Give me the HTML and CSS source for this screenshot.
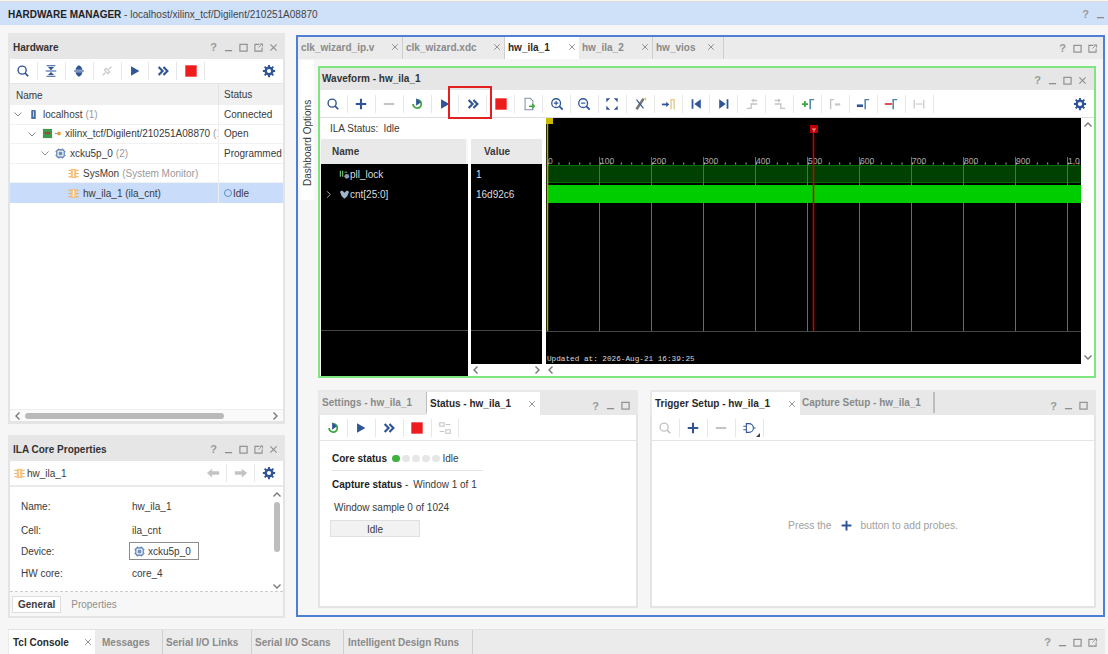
FILE: index.html
```html
<!DOCTYPE html>
<html lang="en">
<head>
    <meta charset="UTF-8">
    <title>Hardware Manager</title>
    <link rel="stylesheet" href="styles.css">
</head>
<body>
    <svg class="defs" width="0" height="0">
        <symbol id="i-search" viewBox="0 0 16 16"><circle cx="7" cy="7" r="4.6" fill="none" stroke="currentColor" stroke-width="1.6"/><path d="M10.4 10.4L14 14" stroke="currentColor" stroke-width="2"/></symbol>
        <symbol id="i-collapse" viewBox="0 0 16 16"><path d="M3 2h10M3 14h10M2 8h12" stroke="currentColor" stroke-width="1.4"/><path d="M4.500 3.500h7L8 7zM4.500 12.500h7L8 9z" fill="currentColor"/></symbol>
        <symbol id="i-expand" viewBox="0 0 16 16"><path d="M2.500 8h11" stroke="currentColor" stroke-width="1.400"/><path d="M4 6.500C4.500 4 6 2.500 8 1.500c2 1 3.500 2.500 4 5zM4 9.500h8c-.5 2.500-2 4-4 5-2-1-3.500-2.500-4-5z" fill="currentColor"/></symbol>
        <symbol id="i-plug" viewBox="0 0 16 16"><path d="M3 13l3-3M10 6l3-3M5 7l4 4 2-2-4-4z" fill="none" stroke="currentColor" stroke-width="1.300"/></symbol>
        <symbol id="i-play" viewBox="0 0 16 16"><path d="M3.500 2.500L13 8l-9.500 5.500z" fill="currentColor"/></symbol>
        <symbol id="i-ff" viewBox="0 0 16 16"><path d="M3 3.500L7.500 8 3 12.500M8.500 3.500L13 8l-4.500 4.500" fill="none" stroke="currentColor" stroke-width="2.500"/></symbol>
        <symbol id="i-stop" viewBox="0 0 16 16"><rect x="1.500" y="1.500" width="13" height="13" fill="currentColor"/></symbol>
        <symbol id="i-gear" viewBox="0 0 16 16"><circle cx="8" cy="8" r="3.800" fill="none" stroke="currentColor" stroke-width="2.800"/><path d="M8 1v3M8 12v3M1 8h3M12 8h3M3 3l2 2M11 11l2 2M3 13l2-2M11 5l2-2" stroke="currentColor" stroke-width="2.200"/></symbol>
        <symbol id="i-plus" viewBox="0 0 16 16"><path d="M8 2v12M2 8h12" stroke="currentColor" stroke-width="2.400"/></symbol>
        <symbol id="i-minus" viewBox="0 0 16 16"><path d="M2 8h12" stroke="currentColor" stroke-width="2.400"/></symbol>
        <symbol id="i-refresh" viewBox="0 0 16 16"><path d="M3.500 8a4.700 4.700 0 1 0 4.500-4.700" fill="none" stroke="#3fa63f" stroke-width="2"/><path d="M7 1.500L12.500 6 7 10z" fill="#2f5597"/></symbol>
        <symbol id="i-export" viewBox="0 0 16 16"><path d="M3.500 1.500h6l3 3v10h-9z" fill="#fff" stroke="#7f8fa8" stroke-width="1.200"/><path d="M8 10.500h6M11.500 8l2.500 2.500-2.500 2.500" fill="none" stroke="#3fa63f" stroke-width="1.600"/></symbol>
        <symbol id="i-zoomin" viewBox="0 0 16 16"><circle cx="7" cy="7" r="5" fill="none" stroke="currentColor" stroke-width="1.500"/><path d="M10.500 10.500L14.500 14.500" stroke="currentColor" stroke-width="2"/><path d="M4.500 7h5M7 4.500v5" stroke="currentColor" stroke-width="1.300"/></symbol>
        <symbol id="i-zoomout" viewBox="0 0 16 16"><circle cx="7" cy="7" r="5" fill="none" stroke="currentColor" stroke-width="1.500"/><path d="M10.500 10.500L14.500 14.500" stroke="currentColor" stroke-width="2"/><path d="M4.500 7h5" stroke="currentColor" stroke-width="1.300"/></symbol>
        <symbol id="i-fit" viewBox="0 0 16 16"><path d="M1.500 1.500h4.500l-4.500 4.500zM14.500 1.500h-4.500l4.500 4.500zM1.500 14.500h4.500l-4.500-4.500zM14.500 14.500h-4.500l4.500-4.500z" fill="currentColor"/></symbol>
        <symbol id="i-cut" viewBox="0 0 16 16"><path d="M4 14L12 2" stroke="#777" stroke-width="3"/><path d="M4 3l8 10" stroke="#2f5597" stroke-width="1.300"/><path d="M12 1.500h2.500V4" fill="none" stroke="#d9c27a" stroke-width="1.200"/></symbol>
        <symbol id="i-mark-in" viewBox="0 0 16 16"><path d="M15 14V3h-3.500v11" fill="none" stroke="#e3cb85" stroke-width="1.600"/><path d="M1 8.500h6" stroke="#2f5597" stroke-width="2"/><path d="M6 5.500l3.500 3-3.500 3z" fill="#2f5597"/></symbol>
        <symbol id="i-first" viewBox="0 0 16 16"><path d="M3 2.500h2v11H3zM13.500 2.500v11L6 8z" fill="currentColor"/></symbol>
        <symbol id="i-last" viewBox="0 0 16 16"><path d="M13 2.500h-2v11h2zM2.500 2.500v11L10 8z" fill="currentColor"/></symbol>
        <symbol id="i-step-a" viewBox="0 0 16 16"><path d="M2 13h5V8h7M9 4h5" fill="none" stroke="#c4c4c4" stroke-width="1.500"/><path d="M7 4l3-2.500v5z" fill="#c4c4c4"/></symbol>
        <symbol id="i-step-b" viewBox="0 0 16 16"><path d="M2 8h7v5h5M2 4h5" fill="none" stroke="#c4c4c4" stroke-width="1.500"/><path d="M9 4L6 1.500v5z" fill="#c4c4c4"/></symbol>
        <symbol id="i-add-mark" viewBox="0 0 16 16"><path d="M1 8h7M4.500 4.500v7" stroke="#3fa63f" stroke-width="2"/><path d="M10.500 14V3H15" fill="none" stroke="#4a7fa8" stroke-width="1.700"/></symbol>
        <symbol id="i-prev-mark" viewBox="0 0 16 16"><path d="M3 14V3h4" fill="none" stroke="#c4c4c4" stroke-width="1.600"/><path d="M8 8.500h6" stroke="#c4c4c4" stroke-width="2.400"/></symbol>
        <symbol id="i-next-mark" viewBox="0 0 16 16"><path d="M10.500 14V3H15" fill="none" stroke="#4a7fa8" stroke-width="1.700"/><path d="M1 10h7" stroke="#2f5597" stroke-width="3"/></symbol>
        <symbol id="i-del-mark" viewBox="0 0 16 16"><path d="M1 8h8" stroke="#e03030" stroke-width="2"/><path d="M10.500 14V3H15" fill="none" stroke="#4a7fa8" stroke-width="1.700"/></symbol>
        <symbol id="i-span" viewBox="0 0 16 16"><path d="M2.500 3v10M13.500 3v10M4 8h8" stroke="#c4c4c4" stroke-width="1.300"/></symbol>
        <symbol id="i-slices" viewBox="0 0 16 16"><path d="M2 2h5v4H2zM9 10h5v4H9z" fill="none" stroke="#c4c4c4" stroke-width="1.200"/><path d="M9 4h5M2 12h5" stroke="#c4c4c4" stroke-width="1.200"/></symbol>
        <symbol id="i-gate" viewBox="0 0 16 16"><path d="M5 3h3a5 5 0 0 1 0 10H5zM1.500 6H5M1.500 10H5M13 8h2.500" fill="none" stroke="currentColor" stroke-width="1.200"/></symbol>
        <symbol id="i-arrow-l" viewBox="0 0 16 16"><path d="M1 8l6-5v3h8v4H7v3z" fill="currentColor"/></symbol>
        <symbol id="i-arrow-r" viewBox="0 0 16 16"><path d="M15 8L9 3v3H1v4h8v3z" fill="currentColor"/></symbol>
        <symbol id="i-min" viewBox="0 0 10 10"><path d="M1 8.500h8" stroke="currentColor" stroke-width="1.400"/></symbol>
        <symbol id="i-max" viewBox="0 0 10 10"><rect x="1" y="1.500" width="8" height="7.500" fill="none" stroke="currentColor" stroke-width="1.300"/></symbol>
        <symbol id="i-float" viewBox="0 0 10 10"><path d="M6 1.500H1v7.500h8V5" fill="none" stroke="currentColor" stroke-width="1.200"/><path d="M5 5l4-4M6.500 1h3v3" fill="none" stroke="currentColor" stroke-width="1"/></symbol>
        <symbol id="i-close" viewBox="0 0 10 10"><path d="M1.500 1.500l7 7M8.500 1.500l-7 7" stroke="currentColor" stroke-width="1.200"/></symbol>
        <symbol id="i-chev-d" viewBox="0 0 10 10"><path d="M1.500 3.500L5 7l3.500-3.500" fill="none" stroke="currentColor" stroke-width="1"/></symbol>
        <symbol id="i-chev-r" viewBox="0 0 10 10"><path d="M3.500 1.500L7 5 3.500 8.500" fill="none" stroke="currentColor" stroke-width="1"/></symbol>
        <symbol id="i-chev-l" viewBox="0 0 10 10"><path d="M6.500 1.500L3 5l3.500 3.500" fill="none" stroke="currentColor" stroke-width="1.400"/></symbol>
        <symbol id="i-chev-rb" viewBox="0 0 10 10"><path d="M3.500 1.500L7 5 3.500 8.500" fill="none" stroke="currentColor" stroke-width="1.400"/></symbol>
        <symbol id="i-chev-u" viewBox="0 0 10 10"><path d="M1.500 6.500L5 3l3.500 3.500" fill="none" stroke="currentColor" stroke-width="1.400"/></symbol>
        <symbol id="i-chev-db" viewBox="0 0 10 10"><path d="M1.500 3.500L5 7l3.500-3.500" fill="none" stroke="currentColor" stroke-width="1.400"/></symbol>
        <symbol id="i-chip" viewBox="0 0 12 12"><rect x="2" y="2" width="8" height="8" rx="1.500" fill="none" stroke="#4a6fa5" stroke-width="1.200"/><rect x="4" y="4" width="4" height="4" fill="#6d8fc0"/><path d="M4 0.500v1M8 0.500v1M4 10.500v1M8 10.500v1M0.500 4h1M0.500 8h1M10.500 4h1M10.500 8h1" stroke="#4a6fa5"/></symbol>
        <symbol id="i-ila" viewBox="0 0 12 12"><rect x="3" y="1" width="6" height="10" fill="#f7c27c"/><path d="M6 2.500v7" stroke="#fff" stroke-width="1.400"/><path d="M0.500 2.500H3M0.500 6H3M0.500 9.500H3M9 2.500h2.500M9 6h2.500M9 9.500h2.500" stroke="#eba040"/></symbol>
        <symbol id="i-host" viewBox="0 0 12 12"><rect x="3.500" y="1" width="5" height="10" rx="1" fill="#4a6fa5"/><path d="M6 2.500v6" stroke="#c9d6ea"/></symbol>
        <symbol id="i-board" viewBox="0 0 12 12"><rect x="1" y="1" width="10" height="10" fill="#3f9a4a"/><rect x="3" y="4.500" width="6" height="2" fill="#a83c3c"/></symbol>
        <symbol id="i-link" viewBox="0 0 8 8"><circle cx="4.500" cy="4" r="2.200" fill="#e8a030"/><path d="M0 4h2.500" stroke="#888"/></symbol>
        <symbol id="i-bit" viewBox="0 0 12 12"><path d="M1.500 2v6.500M4 2v6.500" stroke="#6fbf7a" stroke-width="1.300"/><circle cx="8.500" cy="8" r="2.600" fill="#8f9aa8"/><path d="M6 3.500h3" stroke="#6fbf7a"/></symbol>
        <symbol id="i-bus" viewBox="0 0 12 12"><path d="M1 3l2.500-1.500L6 4l2.500-2.500L11 3 9 8l-3 2.500L3 8z" fill="#9db4cc"/></symbol>
    </svg>

    <div class="title-bar">
        <div><b>HARDWARE MANAGER</b> - localhost/xilinx_tcf/Digilent/210251A08870</div>
        <div class="title-help"><span class="help">?</span><svg class="wc"><use href="#i-min"/></svg></div>
    </div>

    <div class="main">
        <div class="left-col">
            <section class="panel hw-panel">
                <header class="panel-head">
                    <span class="panel-title">Hardware</span>
                    <div class="win-ctl"><span class="help">?</span><svg class="wc"><use href="#i-min"/></svg><svg class="wc"><use href="#i-max"/></svg><svg class="wc"><use href="#i-float"/></svg><svg class="wc"><use href="#i-close"/></svg></div>
                </header>
                <div class="toolbar">
                    <span class="tb"><svg class="blue"><use href="#i-search"/></svg></span>
                    <span class="tb"><svg class="blue"><use href="#i-collapse"/></svg></span>
                    <span class="tb"><svg class="blue"><use href="#i-expand"/></svg></span>
                    <span class="tb"><svg class="dim"><use href="#i-plug"/></svg></span>
                    <span class="tb"><svg class="blue"><use href="#i-play"/></svg></span>
                    <span class="tb"><svg class="blue"><use href="#i-ff"/></svg></span>
                    <span class="tb"><svg class="red"><use href="#i-stop"/></svg></span>
                    <span class="tb-gear"><svg class="blue"><use href="#i-gear"/></svg></span>
                </div>
                <div class="tree-head"><span class="th-name">Name</span><span class="th-status">Status</span></div>
                <div class="tree">
                    <div class="tree-row">
                        <div class="tree-name pad-1"><svg class="chev"><use href="#i-chev-d"/></svg><svg class="node host-node"><use href="#i-host"/></svg>localhost <em>(1)</em></div>
                        <div class="tree-status">Connected</div>
                    </div>
                    <div class="tree-row">
                        <div class="tree-name pad-2"><svg class="chev"><use href="#i-chev-d"/></svg><svg class="node"><use href="#i-board"/></svg><svg class="node-sm"><use href="#i-link"/></svg>xilinx_tcf/Digilent/210251A08870 <em>(1)</em></div>
                        <div class="tree-status">Open</div>
                    </div>
                    <div class="tree-row">
                        <div class="tree-name pad-3"><svg class="chev"><use href="#i-chev-d"/></svg><svg class="node"><use href="#i-chip"/></svg>xcku5p_0 <em>(2)</em></div>
                        <div class="tree-status">Programmed</div>
                    </div>
                    <div class="tree-row">
                        <div class="tree-name pad-4"><svg class="node"><use href="#i-ila"/></svg>SysMon <em>(System Monitor)</em></div>
                        <div class="tree-status"></div>
                    </div>
                    <div class="tree-row selected">
                        <div class="tree-name pad-4"><svg class="node"><use href="#i-ila"/></svg>hw_ila_1 (ila_cnt)</div>
                        <div class="tree-status"><i class="idle-ring"></i>Idle</div>
                    </div>
                </div>
                <div class="hscroll">
                    <svg class="sb-arrow"><use href="#i-chev-l"/></svg>
                    <div class="hscroll-track"><div class="hscroll-thumb"></div></div>
                    <svg class="sb-arrow"><use href="#i-chev-rb"/></svg>
                </div>
            </section>

            <section class="panel props-panel">
                <header class="panel-head">
                    <span class="panel-title">ILA Core Properties</span>
                    <div class="win-ctl"><span class="help">?</span><svg class="wc"><use href="#i-min"/></svg><svg class="wc"><use href="#i-max"/></svg><svg class="wc"><use href="#i-float"/></svg><svg class="wc"><use href="#i-close"/></svg></div>
                </header>
                <div class="props-bar">
                    <svg class="node"><use href="#i-ila"/></svg><span>hw_ila_1</span>
                    <div class="props-nav">
                        <span class="tb"><svg class="dim"><use href="#i-arrow-l"/></svg></span>
                        <span class="tb"><svg class="dim"><use href="#i-arrow-r"/></svg></span>
                        <span class="tb-last"><svg class="blue"><use href="#i-gear"/></svg></span>
                    </div>
                </div>
                <div class="props-body">
                    <div class="props-list">
                        <div class="prop prop-name"><span>Name:</span><span>hw_ila_1</span></div>
                        <div class="prop prop-cell"><span>Cell:</span><span>ila_cnt</span></div>
                        <div class="prop prop-device"><span>Device:</span><span class="device-box"><svg class="node"><use href="#i-chip"/></svg>xcku5p_0</span></div>
                        <div class="prop prop-core"><span>HW core:</span><span>core_4</span></div>
                    </div>
                    <div class="vscroll">
                        <svg class="sb-arrow"><use href="#i-chev-u"/></svg>
                        <div class="vscroll-track"><div class="vscroll-thumb"></div></div>
                        <svg class="sb-arrow"><use href="#i-chev-db"/></svg>
                    </div>
                </div>
                <div class="props-tabs"><span class="ptab-on">General</span><span class="ptab">Properties</span></div>
            </section>
        </div>

        <div class="frame">
            <div class="tabs frame-tabs">
                <div class="tab t-ip">clk_wizard_ip.v<svg class="x"><use href="#i-close"/></svg></div>
                <div class="tab t-xdc">clk_wizard.xdc<svg class="x"><use href="#i-close"/></svg></div>
                <div class="tab on t-ila1">hw_ila_1<svg class="x"><use href="#i-close"/></svg></div>
                <div class="tab t-ila2">hw_ila_2<svg class="x"><use href="#i-close"/></svg></div>
                <div class="tab t-vios">hw_vios<svg class="x"><use href="#i-close"/></svg></div>
                <div class="win-ctl"><span class="help">?</span><svg class="wc"><use href="#i-max"/></svg><svg class="wc"><use href="#i-float"/></svg></div>
            </div>
            <div class="frame-body">
                <div class="dash-strip"><span>Dashboard Options</span></div>
                <div class="frame-col">
                    <section class="wave-panel">
                        <header class="panel-head wave-head">
                            <span class="panel-title">Waveform - hw_ila_1</span>
                            <div class="win-ctl"><span class="help">?</span><svg class="wc"><use href="#i-min"/></svg><svg class="wc"><use href="#i-max"/></svg><svg class="wc"><use href="#i-close"/></svg></div>
                        </header>
                        <div class="toolbar wave-tools">
                            <span class="tb"><svg class="blue"><use href="#i-search"/></svg></span>
                            <span class="tb"><svg class="blue"><use href="#i-plus"/></svg></span>
                            <span class="tb"><svg class="dim"><use href="#i-minus"/></svg></span>
                            <span class="tb"><svg><use href="#i-refresh"/></svg></span>
                            <span class="tb"><svg class="blue"><use href="#i-play"/></svg></span>
                            <span class="tb"><svg class="blue"><use href="#i-ff"/></svg></span>
                            <span class="tb"><svg class="red"><use href="#i-stop"/></svg></span>
                            <span class="tb"><svg><use href="#i-export"/></svg></span>
                            <span class="tb"><svg class="blue"><use href="#i-zoomin"/></svg></span>
                            <span class="tb"><svg class="blue"><use href="#i-zoomout"/></svg></span>
                            <span class="tb"><svg class="blue"><use href="#i-fit"/></svg></span>
                            <span class="tb"><svg><use href="#i-cut"/></svg></span>
                            <span class="tb"><svg><use href="#i-mark-in"/></svg></span>
                            <span class="tb"><svg class="blue"><use href="#i-first"/></svg></span>
                            <span class="tb"><svg class="blue"><use href="#i-last"/></svg></span>
                            <span class="tb"><svg><use href="#i-step-a"/></svg></span>
                            <span class="tb"><svg><use href="#i-step-b"/></svg></span>
                            <span class="tb"><svg><use href="#i-add-mark"/></svg></span>
                            <span class="tb"><svg><use href="#i-prev-mark"/></svg></span>
                            <span class="tb"><svg><use href="#i-next-mark"/></svg></span>
                            <span class="tb"><svg><use href="#i-del-mark"/></svg></span>
                            <span class="tb"><svg><use href="#i-span"/></svg></span>
                            <span class="tb-gear"><svg class="blue"><use href="#i-gear"/></svg></span>
                            <div class="callout"></div>
                        </div>
                        <div class="wave-body">
                            <div class="probes">
                                <div class="ila-status"><span>ILA Status:</span><span>Idle</span></div>
                                <div class="probe-cols">
                                    <div class="probe-names">
                                        <div class="probe-th">Name</div>
                                        <div class="probe-black">
                                            <div class="probe-row"><svg class="node"><use href="#i-bit"/></svg>pll_lock</div>
                                            <div class="probe-row"><svg class="chev-w"><use href="#i-chev-r"/></svg><svg class="node"><use href="#i-bus"/></svg>cnt[25:0]</div>
                                            <div class="probe-rule"></div>
                                        </div>
                                    </div>
                                    <div class="probe-vals">
                                        <div class="probe-th">Value</div>
                                        <div class="probe-black val-black">
                                            <div class="probe-row">1</div>
                                            <div class="probe-row">16d92c6</div>
                                            <div class="probe-rule"></div>
                                        </div>
                                        <div class="wave-scroll"><svg class="sb-arrow"><use href="#i-chev-l"/></svg><svg class="sb-arrow"><use href="#i-chev-rb"/></svg></div>
                                    </div>
                                </div>
                            </div>
                            <div class="trace">
                                <div class="trace-row">
                                    <svg class="trace-svg" width="535" height="246" viewBox="0 0 535 246">
                                        <rect width="535" height="246" fill="#000"/>
                                        <path d="M53.500 39V213M105.500 39V213M157.500 39V213M209.500 39V213M261.500 39V213M313.500 39V213M365.500 39V213M417.500 39V213M469.500 39V213M521.500 39V213" stroke="#6a6a6a"/>
                                        <path d="M0 213.500H535" stroke="#444"/>
                                        <line x1="2" y1="45.500" x2="535" y2="45.500" stroke="#b0b0b0" stroke-width="2" stroke-dasharray="1 9.400"/>
                                        <rect x="1" y="47" width="534" height="18" fill="#004000"/>
                                        <path d="M1 47.500H534M1 64.500H534" stroke="#007000"/>
                                        <rect x="1" y="67" width="534" height="18" fill="#00cd00"/>
                                        <path d="M53.500 47V65M105.500 47V65M157.500 47V65M209.500 47V65M261.500 47V65M313.500 47V65M365.500 47V65M417.500 47V65M469.500 47V65M521.500 47V65" stroke="#4e6e4e"/>
                                        <g class="ruler-text">
                                            <text x="2" y="46">0</text><text x="54" y="46">100</text><text x="106" y="46">200</text><text x="158" y="46">300</text><text x="210" y="46">400</text><text x="262" y="46">500</text><text x="314" y="46">600</text><text x="366" y="46">700</text><text x="418" y="46">800</text><text x="470" y="46">900</text><text x="522" y="46">1,0</text>
                                        </g>
                                        <path d="M1.500 0V213" stroke="#b8a800" stroke-width="1.500"/>
                                        <rect x="0" y="0" width="7" height="6" fill="#c9b800"/>
                                        <path d="M267.500 12V213" stroke="#d00000" stroke-width="1.500"/>
                                        <rect x="264" y="7" width="8" height="8" fill="#c00000"/>
                                        <path d="M266 11h4M268 11v3" stroke="#f0a0a0"/>
                                        <text class="updated" x="1" y="243">Updated at: 2026-Aug-21 16:39:25</text>
                                    </svg>
                                    <div class="trace-vbar">
                                        <svg class="sb-arrow"><use href="#i-chev-u"/></svg>
                                        <svg class="sb-arrow"><use href="#i-chev-db"/></svg>
                                    </div>
                                </div>
                                <div class="wave-scroll trace-scroll"><svg class="sb-arrow"><use href="#i-chev-l"/></svg></div>
                            </div>
                        </div>
                    </section>

                    <div class="lower">
                        <section class="panel status-panel">
                            <div class="tabs inner-tabs">
                                <div class="tab t-settings">Settings - hw_ila_1</div>
                                <div class="tab on t-status">Status - hw_ila_1<svg class="x"><use href="#i-close"/></svg></div>
                                <div class="win-ctl low-ctl"><span class="help">?</span><svg class="wc"><use href="#i-min"/></svg><svg class="wc"><use href="#i-max"/></svg></div>
                            </div>
                            <div class="toolbar low-tools">
                                <span class="tb"><svg><use href="#i-refresh"/></svg></span>
                                <span class="tb"><svg class="blue"><use href="#i-play"/></svg></span>
                                <span class="tb"><svg class="blue"><use href="#i-ff"/></svg></span>
                                <span class="tb"><svg class="red"><use href="#i-stop"/></svg></span>
                                <span class="tb"><svg><use href="#i-slices"/></svg></span>
                            </div>
                            <div class="status-body">
                                <div class="core-line">
                                    <b>Core status</b>
                                    <span class="dots"><i class="dot green"></i><i class="dot"></i><i class="dot"></i><i class="dot"></i><i class="dot"></i></span>
                                    <span>Idle</span>
                                </div>
                                <div class="status-rule"></div>
                                <div class="capture-line"><b>Capture status</b><span class="dash">-</span><span>Window 1 of 1</span></div>
                                <div class="sample-line">Window sample 0 of 1024</div>
                                <div class="idle-btn">Idle</div>
                            </div>
                        </section>

                        <section class="panel trigger-panel">
                            <div class="tabs inner-tabs">
                                <div class="tab on t-trigger">Trigger Setup - hw_ila_1<svg class="x"><use href="#i-close"/></svg></div>
                                <div class="tab t-capture">Capture Setup - hw_ila_1</div>
                                <div class="win-ctl low-ctl"><span class="help">?</span><svg class="wc"><use href="#i-min"/></svg><svg class="wc"><use href="#i-max"/></svg></div>
                            </div>
                            <div class="toolbar low-tools">
                                <span class="tb"><svg class="dim"><use href="#i-search"/></svg></span>
                                <span class="tb"><svg class="blue"><use href="#i-plus"/></svg></span>
                                <span class="tb"><svg class="dim"><use href="#i-minus"/></svg></span>
                                <span class="tb tb-corner"><svg class="blue"><use href="#i-gate"/></svg></span>
                            </div>
                            <div class="trigger-body">
                                <span>Press the</span><svg class="hint-plus blue"><use href="#i-plus"/></svg><span>button to add probes.</span>
                            </div>
                        </section>
                    </div>
                </div>
            </div>
        </div>
    </div>

    <div class="console-tabs">
        <div class="tab on t-tcl">Tcl Console<svg class="x"><use href="#i-close"/></svg></div>
        <div class="tab t-msg">Messages</div>
        <div class="tab t-links">Serial I/O Links</div>
        <div class="tab t-scans">Serial I/O Scans</div>
        <div class="tab t-runs">Intelligent Design Runs</div>
        <div class="win-ctl"><span class="help">?</span><svg class="wc"><use href="#i-min"/></svg><svg class="wc"><use href="#i-max"/></svg><svg class="wc"><use href="#i-float"/></svg></div>
    </div>
</body>
</html>
```

FILE: styles.css
```css
* {
    box-sizing: border-box;
}
html, body {
    margin: 0;
    height: 654px;
    overflow: hidden;
}
body {
    width: 1108px;
    background: #f6f6f6;
    font-family: "Liberation Sans", Arial, sans-serif;
    font-size: 10px;
    color: #3a3a3a;
}
.defs {
    position: absolute;
}
svg {
    width: 14px;
    height: 14px;
    flex: none;
}
.blue { color: #2f5597; }
.dim { color: #c4c4c4; }
.red { color: #ee1c1c; }

.title-bar {
    margin-top: 1px;
    height: 24px;
    padding: 1px 0 0 8px;
    border-top: 1px solid #dcdcdc;
    background: #cfe0f9;
    display: flex;
    align-items: center;
    justify-content: space-between;
    color: #444;
}
.title-bar b {
    color: #222;
}
.title-help {
    display: flex;
    align-items: center;
}
.main {
    display: flex;
    padding: 8px 0 0 8px;
    gap: 11px;
}
.left-col {
    width: 277px;
    display: flex;
    flex-direction: column;
    gap: 11px;
}

/* panels */
.panel {
    border: 2px solid #e4e4e4;
    border-top: 0;
    background: #fff;
    display: flex;
    flex-direction: column;
}
.panel-head {
    height: 26px;
    background: #e6e6e6;
    margin: 0 -2px;
    padding: 2px 4px 0 5px;
    display: flex;
    align-items: center;
    justify-content: space-between;
    flex: none;
}
.panel-title {
    font-weight: bold;
    color: #333;
}
.win-ctl {
    margin-left: auto;
    display: flex;
    align-items: center;
    color: #8b8b8b;
}
.help {
    width: 15px;
    text-align: center;
    font-weight: bold;
    font-size: 11px;
    color: #9a9a9a;
}
.wc {
    width: 15px;
    height: 9px;
    color: #8e8e8e;
}
.toolbar {
    height: 25px;
    background: #fff;
    border-bottom: 1px solid #e4e4e4;
    display: flex;
    align-items: center;
    flex: none;
    position: relative;
}
.low-tools {
    height: 26px;
}
.tb {
    width: 27.9px;
    height: 18px;
    display: flex;
    align-items: center;
    justify-content: center;
    border-right: 1px solid #e6e6e6;
    flex: none;
}
.tb-gear {
    margin-left: auto;
    margin-right: 7px;
    display: flex;
}

/* hardware tree */
.hw-panel {
    height: 391px;
    border-bottom-width: 3px;
}
.tree-head {
    height: 21px;
    background: #f0f0f0;
    display: flex;
    align-items: center;
    flex: none;
    line-height: 23px;
}
.th-name {
    width: 209px;
    padding-left: 6px;
    height: 100%;
    border-right: 1px solid #e2e2e2;
}
.th-status {
    padding-left: 5px;
}
.tree {
    flex: 1;
}
.tree-row {
    height: 19.6px;
    display: flex;
    border-bottom: 1px solid #f1f1f1;
    line-height: 19px;
    white-space: nowrap;
}
.tree-row.selected {
    background: #c9dcfa;
    border-bottom: 0;
}
.tree-name {
    width: 209px;
    overflow: hidden;
    display: flex;
    align-items: center;
    border-right: 1px solid #eee;
    flex: none;
}
.tree-name em {
    font-style: normal;
    color: #9a9a9a;
    margin-left: 3px;
}
.tree-status {
    padding-left: 5px;
    display: flex;
    align-items: center;
}
.pad-1 { padding-left: 3px; }
.pad-2 { padding-left: 17px; }
.pad-3 { padding-left: 30px; }
.pad-4 { padding-left: 58px; }
.chev {
    width: 10px;
    height: 10px;
    color: #8a8a8a;
    margin-right: 5px;
}
.node {
    width: 11px;
    height: 11px;
    margin-right: 4px;
}
.host-node {
    margin-right: 4px;
}
.node-sm {
    width: 7px;
    height: 7px;
    margin: 0 3px 0 -2px;
}
.idle-ring {
    width: 8px;
    height: 8px;
    border: 1px solid #5b90c8;
    border-radius: 50%;
    margin-right: 1px;
}
.hscroll {
    height: 12px;
    display: flex;
    align-items: center;
    border-top: 1px solid #eee;
    background: #fafafa;
    flex: none;
    justify-content: space-between;
    padding: 0 3px;
}
.sb-arrow {
    width: 10px;
    height: 10px;
    color: #777;
}
.hscroll-track {
    flex: 1;
    padding: 0 2px;
}
.hscroll-thumb {
    width: 199px;
    height: 6px;
    border-radius: 3px;
    background: #b9b9b9;
}

/* properties */
.props-panel {
    height: 183px;
}
.props-bar {
    height: 26px;
    display: flex;
    align-items: center;
    padding-left: 4px;
    border-bottom: 2px solid #eaeaea;
    flex: none;
}
.props-bar > .node {
    margin-right: 2px;
}
.props-nav {
    margin-left: auto;
    display: flex;
    align-items: center;
    padding-right: 1px;
}
.tb-last {
    width: 27px;
    display: flex;
    justify-content: center;
}
.props-body {
    flex: 1;
    display: flex;
    min-height: 0;
    border-bottom: 1px dashed #ccc;
}
.props-list {
    flex: 1;
    padding: 10px 0 0 11px;
}
.prop {
    display: flex;
    align-items: center;
    height: 18px;
}
.prop span:first-child {
    width: 111px;
}
.prop-cell { margin-top: 6px; }
.prop-device { margin-top: 3px; }
.prop-core { margin-top: 4px; }
.device-box {
    height: 18px;
    width: 70px;
    margin-left: -3px;
    border: 1px solid #8c8c8c;
    display: flex;
    align-items: center;
    padding-left: 4px;
    white-space: nowrap;
}
.device-box .node {
    margin-right: 3px;
}
.vscroll {
    width: 11px;
    margin-right: 1px;
    display: flex;
    flex-direction: column;
    align-items: center;
    justify-content: space-between;
    padding-top: 3px;
}
.vscroll-track {
    flex: 1;
    padding-top: 2px;
}
.vscroll-thumb {
    width: 6px;
    height: 50px;
    border-radius: 3px;
    background: #bdbdbd;
}
.props-tabs {
    height: 24px;
    background: #f7f7f7;
    display: flex;
    align-items: center;
    padding: 0 0 0 2px;
    flex: none;
}
.ptab-on {
    height: 17px;
    line-height: 15px;
    padding: 0 5px;
    background: #fff;
    border: 1px solid #ddd;
    font-weight: bold;
}
.ptab {
    margin-left: 10px;
    color: #8f8f8f;
}

/* blue frame */
.frame {
    width: 809px;
    height: 582px;
    margin-top: 2px;
    border: 2.5px solid #4f7fd4;
    background: #f6f6f6;
    display: flex;
    flex-direction: column;
}
.tabs {
    display: flex;
    flex: none;
    background: #ebebeb;
}
.frame-tabs {
    height: 22px;
    padding-right: 3px;
}
.frame-tabs .tab {
    padding-bottom: 2px;
}
.tab {
    height: 100%;
    display: flex;
    align-items: center;
    justify-content: space-between;
    padding: 0 3px;
    color: #8a8a8a;
    font-weight: bold;
    border-right: 1px solid #cfcfcf;
    white-space: nowrap;
}
.tab.on {
    background: #fff;
    color: #2a2a2a;
    border-right: 0;
}
.x {
    width: 8px;
    height: 8px;
    color: #8e8e8e;
    flex: none;
}
.t-ip { width: 105px; }
.t-xdc { width: 102px; }
.t-ila1 { width: 74px; }
.t-ila2 { width: 74px; }
.t-vios { width: 71px; padding-right: 8px; }
.frame-body {
    flex: 1;
    display: flex;
    min-height: 0;
}
.dash-strip {
    width: 14px;
    height: 140px;
    margin: 1px 0 0 2px;
    background: #fff;
    display: flex;
    justify-content: center;
    flex: none;
}
.dash-strip span {
    writing-mode: vertical-rl;
    transform: rotate(180deg);
    height: 88px;
    margin-top: 38px;
    white-space: nowrap;
}
.frame-col {
    width: 778px;
    margin-left: 4px;
    padding-top: 7px;
    display: flex;
    flex-direction: column;
    gap: 12px;
}

/* waveform */
.wave-panel {
    height: 312px;
    border: 2.5px solid #7fe67f;
    background: #fff;
    display: flex;
    flex-direction: column;
    flex: none;
}
.wave-head {
    height: 22px;
    margin: 0;
    padding: 0 4px 1px 2px;
}
.wave-head .win-ctl {
    margin-top: 3px;
}
.wave-tools {
    height: 28px;
    border-bottom: 1px solid #ddd;
}
.callout {
    position: absolute;
    left: 127.500px;
    top: -4px;
    width: 44px;
    height: 33px;
    border: 2.500px solid #e3201f;
}
.wave-body {
    flex: 1;
    display: flex;
    min-height: 0;
}
.probes {
    width: 223px;
    margin-left: 1px;
    display: flex;
    flex-direction: column;
    flex: none;
}
.ila-status {
    height: 21px;
    padding-left: 9px;
    display: flex;
    align-items: center;
    gap: 5px;
    flex: none;
}
.probe-cols {
    flex: 1;
    display: flex;
    min-height: 0;
    gap: 3px;
}
.probe-names {
    width: 147px;
    display: flex;
    flex-direction: column;
    background: #000;
}
.probe-vals {
    width: 71px;
    display: flex;
    flex-direction: column;
}
.probe-th {
    height: 25px;
    background: #e9e9e9;
    border-right: 2px solid #f7f7f7;
    font-weight: bold;
    line-height: 25px;
    padding-left: 11px;
    flex: none;
}
.probe-vals .probe-th {
    padding-left: 13px;
    border-right: 0;
}
.probe-black {
    flex: 1;
    background: #000;
    color: #ddd;
    padding-top: 1px;
    position: relative;
}
.probe-row {
    height: 19.500px;
    display: flex;
    align-items: center;
    padding-left: 18px;
    white-space: nowrap;
}
.val-black .probe-row {
    padding-left: 5px;
}
.probe-row .node {
    margin-right: 0;
}
.chev-w {
    width: 9px;
    height: 9px;
    color: #bbb;
    margin: 0 6px 0 -15px;
}
.probe-rule {
    position: absolute;
    left: 0;
    right: 0;
    top: 166px;
    height: 1px;
    background: #444;
}
.wave-scroll {
    height: 12px;
    background: #fff;
    display: flex;
    align-items: center;
    justify-content: space-between;
    flex: none;
}
.trace {
    margin-left: 2px;
    flex: 1;
    display: flex;
    flex-direction: column;
    min-width: 0;
}
.trace-row {
    display: flex;
}
.trace-svg {
    width: 535px;
    height: 246px;
    display: block;
}
.trace-vbar {
    flex: 1;
    display: flex;
    flex-direction: column;
    align-items: center;
    justify-content: space-between;
    padding: 2px 0;
}
.ruler-text text {
    font-family: "Liberation Sans", Arial, sans-serif;
    font-size: 8.500px;
    fill: #aaa;
}
.updated {
    font-family: "Liberation Mono", monospace;
    font-size: 7.700px;
    fill: #d8d8d8;
}

/* lower panels */
.lower {
    display: flex;
    gap: 12px;
    height: 218px;
}
.status-panel {
    width: 320px;
}
.trigger-panel {
    width: 446px;
}
.inner-tabs {
    height: 25px;
    margin: 0 -2px;
    padding: 2px 2px 0;
    background: #e8e8e8;
}
.t-settings {
    width: 107px;
    padding-left: 2px;
    border-right: 1px solid #bdbdbd;
    height: 21px;
    background: #ebebeb;
}
.t-status {
    width: 113px;
    padding-left: 3px;
    padding-right: 4px;
}
.t-trigger {
    width: 148px;
    padding-right: 4px;
}
.t-capture {
    width: 135px;
    padding-left: 2px;
    border-right: 2px solid #bdbdbd;
    height: 21px;
    justify-content: flex-start;
}
.low-ctl {
    padding: 4px 3px 0 0;
}
.status-body {
    flex: 1;
    padding: 12px 0 0 12px;
}
.core-line,
.capture-line {
    display: flex;
    align-items: center;
}
.core-line b,
.capture-line b {
    color: #222;
}
.dots {
    display: flex;
    margin: 0 3px 0 5px;
    gap: 2.500px;
}
.dot {
    width: 7.500px;
    height: 7.500px;
    border-radius: 50%;
    background: #e6e6e6;
}
.dot.green {
    background: #3fb13f;
}
.status-rule {
    width: 151px;
    height: 1px;
    background: #e4e4e4;
    margin: 6px 0 8px;
}
.dash {
    margin: 0 5px 0 3px;
}
.sample-line {
    margin: 12px 0 0 2px;
}
.idle-btn {
    width: 90px;
    height: 17px;
    margin: 7px 0 0 -2px;
    line-height: 17px;
    text-align: center;
    background: #f2f2f2;
    border: 1px solid #e0e0e0;
}
.trigger-body {
    flex: 1;
    display: flex;
    align-items: center;
    justify-content: center;
    color: #a0a0a0;
    font-size: 10.300px;
    padding: 3px 0 0 0;
}
.hint-plus {
    width: 13px;
    height: 13px;
    margin: 0 8px;
}
.tb-corner {
    position: relative;
}
.tb-corner::after {
    content: "";
    position: absolute;
    right: 3px;
    bottom: 0;
    border-left: 4px solid transparent;
    border-bottom: 4px solid #444;
}

/* bottom console */
.console-tabs {
    height: 25px;
    margin: 11px 3px 0 8px;
    background: #ebebeb;
    border-top: 1px solid #e2e2e2;
    display: flex;
    padding-left: 1px;
    padding-right: 5px;
}
.t-tcl {
    width: 86px;
    padding: 0 3px 0 4px;
}
.t-msg {
    width: 68px;
    padding-left: 7px;
    justify-content: flex-start;
}
.t-links {
    width: 89px;
    padding-left: 3px;
    justify-content: flex-start;
}
.t-scans {
    width: 92px;
    padding-left: 3px;
    justify-content: flex-start;
}
.t-runs {
    width: 129px;
    padding-left: 4px;
    justify-content: flex-start;
}
```
